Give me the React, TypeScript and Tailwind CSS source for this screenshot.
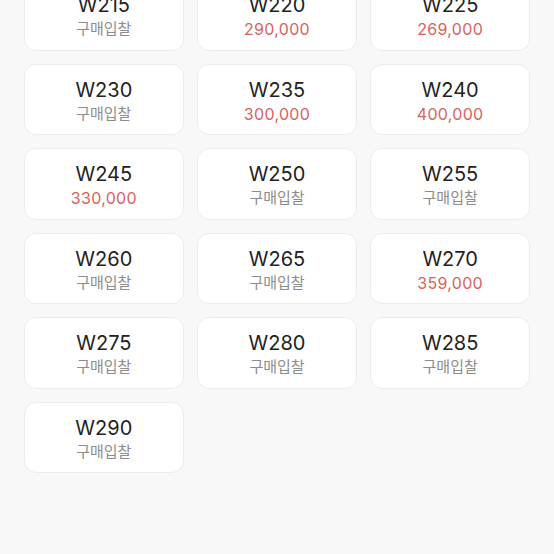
const sizes: { size: number; price?: string }[] = [
  { size: 215 },
  { size: 220, price: "290,000" },
  { size: 225, price: "269,000" },
  { size: 230 },
  { size: 235, price: "300,000" },
  { size: 240, price: "400,000" },
  { size: 245, price: "330,000" },
  { size: 250 },
  { size: 255 },
  { size: 260 },
  { size: 265 },
  { size: 270, price: "359,000" },
  { size: 275 },
  { size: 280 },
  { size: 285 },
  { size: 290 },
];

function SizeCard({ size, price }: { size: number; price?: string }) {
  return (
    <button className="flex h-[71.5px] flex-col items-center justify-start rounded-[12px] border border-[#ececec] bg-white pt-[12px]">
      <span className="text-[20px] leading-[26px] text-[#222222]">W{size}</span>
      {price ? (
        <span className="mt-[1px] text-[16px] leading-[20px] tracking-[0.3px] text-[#d9625d]">
          {price}
        </span>
      ) : (
        <span className="mt-[1px] text-[15px] leading-[20px] text-[#8c8c8c]">구매입찰</span>
      )}
    </button>
  );
}

export default function App() {
  return (
    <div
      className="h-[554px] overflow-hidden bg-[#f8f8f8]"
      style={{ fontFamily: 'Inter, "Noto Sans CJK KR", sans-serif' }}
    >
      <div className="mt-[-21px] grid grid-cols-3 gap-x-[13.5px] gap-y-[13px] px-6">
        {sizes.map((s) => (
          <SizeCard key={s.size} size={s.size} price={s.price} />
        ))}
      </div>
    </div>
  );
}
